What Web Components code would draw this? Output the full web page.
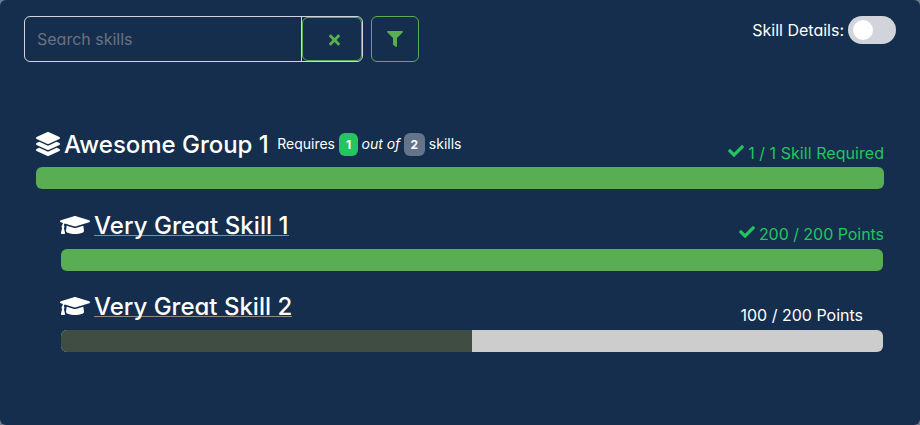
<!DOCTYPE html>
<html lang="en"><head><meta charset="utf-8"><title>Skills</title>
<style>
html{background:#6f7c8e}
body{margin:0;font:16px/24px Inter,"Noto Sans",sans-serif;font-feature-settings:"cv02","cv03","cv04","cv11";color:#fff}
</style></head><body>
<skills-panel></skills-panel>
<script>
const ICONS={
layers:[512,'M12.41 148.02l232.94 105.67c6.8 3.09 14.49 3.09 21.29 0l232.94-105.67c16.55-7.51 16.55-32.52 0-40.03L266.65 2.31a25.607 25.607 0 0 0-21.29 0L12.41 107.98c-16.55 7.51-16.55 32.53 0 40.04zm487.18 88.28l-58.09-26.33-161.64 73.27c-7.56 3.43-15.59 5.17-23.86 5.17s-16.29-1.74-23.86-5.17L70.51 209.97l-58.1 26.33c-16.55 7.5-16.55 32.5 0 40l232.94 105.59c6.8 3.08 14.49 3.08 21.29 0L499.59 276.3c16.55-7.5 16.55-32.5 0-40zm0 127.8l-57.87-26.23-161.86 73.37c-7.56 3.43-15.59 5.17-23.86 5.17s-16.29-1.74-23.86-5.17L70.29 337.87 12.41 364.1c-16.55 7.5-16.55 32.5 0 40l232.94 105.59c6.8 3.08 14.49 3.08 21.29 0L499.59 404.1c16.55-7.5 16.55-32.5 0-40z'],
cap:[640,'M622.34 153.2L343.4 67.5c-15.2-4.67-31.6-4.67-46.79 0L17.66 153.2c-23.54 7.23-23.54 38.36 0 45.59l48.63 14.94c-10.67 13.19-17.23 29.28-17.88 46.9C38.78 266.15 32 276.11 32 288c0 10.78 5.68 19.85 13.86 25.65L20.33 428.53C18.11 438.52 25.71 448 35.94 448h56.11c10.24 0 17.84-9.48 15.62-19.47L82.14 313.65C90.32 307.85 96 298.78 96 288c0-11.57-6.47-21.25-15.66-26.87.76-15.02 8.44-28.3 20.69-36.72L296.6 284.5c9.06 2.78 26.44 6.25 46.79 0l278.95-85.7c23.55-7.24 23.55-38.36 0-45.6zM352.79 315.09c-28.53 8.76-52.84 3.92-65.59 0l-145.02-44.55L128 384c0 35.35 85.96 64 192 64s192-28.65 192-64l-14.18-113.47-145.03 44.56z'],
check:[512,'M173.898 439.404l-166.4-166.4c-9.997-9.997-9.997-26.206 0-36.204l36.203-36.204c9.997-9.998 26.207-9.998 36.204 0L192 312.69 432.095 72.596c9.997-9.997 26.207-9.997 36.204 0l36.203 36.204c9.997 9.997 9.997 26.206 0 36.204l-294.4 294.401c-9.998 9.997-26.207 9.997-36.204-.001z'],
times:[352,'M242.72 256l100.07-100.07c12.28-12.28 12.28-32.19 0-44.48l-22.24-22.24c-12.28-12.28-32.19-12.28-44.48 0L176 189.28 75.93 89.21c-12.28-12.28-32.19-12.28-44.48 0L9.21 111.45c-12.28 12.28-12.28 32.19 0 44.48L109.28 256 9.21 356.07c-12.28 12.28-12.28 32.19 0 44.48l22.24 22.24c12.28 12.28 32.2 12.28 44.48 0L176 322.72l100.07 100.07c12.28 12.28 32.2 12.28 44.48 0l22.24-22.24c12.28-12.28 12.28-32.19 0-44.48L242.72 256z'],
filter:[512,'M487.976 0H24.028C2.71 0-8.047 25.866 7.058 40.971L192 225.941V432c0 7.831 3.821 15.17 10.237 19.662l80 55.98C298.02 518.69 320 507.493 320 487.98V225.941l184.947-184.97C520.021 25.896 509.338 0 487.976 0z']};
const define=(name,render)=>customElements.define(name,class extends HTMLElement{
  connectedCallback(){ if(!this.shadowRoot) this.attachShadow({mode:'open'}).innerHTML=render(this); }
});
define('sk-icon',el=>{const [w,d]=ICONS[el.getAttribute('name')];
return `<style>:host{display:inline-block;height:1em;line-height:0;flex:none}svg{height:1em;width:${w/512}em;display:block;fill:currentColor}</style><svg viewBox="0 0 ${w} 512"><path d="${d}"/></svg>`});
define('search-box',()=>`<style>
:host{display:flex;box-sizing:border-box;width:339px;height:46px;border:1px solid #d1d5db;border-radius:6px}
input{box-sizing:border-box;flex:1;min-width:0;border:0;border-right:1px solid #d1d5db;background:none;padding:0 12px;font:inherit;font-feature-settings:inherit;color:#fff;outline:0}
input::placeholder{color:#6b7280;opacity:1}
button{box-sizing:border-box;width:60px;border:1px solid #59ad52;border-radius:6px;background:none;color:#59ad52;font-size:16px;padding:2px 0 0 4px;display:flex;align-items:center;justify-content:center}
</style><input placeholder="Search skills"><button aria-label="Clear"><sk-icon name="times"></sk-icon></button>`);
define('filter-button',()=>`<style>:host{display:block}button{box-sizing:border-box;width:48px;height:46px;border:1px solid #59ad52;border-radius:6px;background:none;color:#59ad52;font-size:16px;padding:0;display:flex;align-items:center;justify-content:center}</style><button aria-label="Filter"><sk-icon name="filter"></sk-icon></button>`);
define('toggle-switch',()=>`<style>:host{display:flex;align-items:center;box-sizing:border-box;width:48px;height:28px;border-radius:14px;background:#d1d5db;padding:0 5px}i{width:20px;height:20px;border-radius:50%;background:#fff}</style><i></i>`);
define('count-badge',()=>`<style>:host{display:inline-block;box-sizing:border-box;height:23px;min-width:var(--w);margin-top:2px;border-radius:6px;font-weight:700;font-size:12px;line-height:23px;text-align:center;background:var(--badge)}</style><slot></slot>`);
define('progress-bar',el=>`<style>:host{display:block;height:22px;border-radius:6px;overflow:hidden;background:#cdcdcd}i{display:block;height:100%;width:${el.getAttribute('value')}%;background:var(--fill,#59ad52)}</style><i></i>`);
define('skill-row',el=>`<style>
:host{display:block}
.head{display:flex;justify-content:space-between;height:36px}
.title{display:flex;align-items:flex-start;font-size:24px;line-height:28px;font-weight:500}
sk-icon{margin-top:1px}
.name{margin-left:4px;letter-spacing:var(--name-spacing,0)}
.name.link{border-bottom:1px solid #8c8b87;height:23px}
.points{display:flex;align-items:flex-start;line-height:24px;padding-top:10px;gap:4px;letter-spacing:var(--points-spacing,0)}
.points sk-icon{margin-top:2px}
:host([link]) .title{margin-top:-1px}
:host([link]) .points{padding-top:9px}
.done{color:#22c55e}
.open{padding-right:21px}
progress-bar{margin:0 var(--bar-inset,0)}
</style><div class="head"><div class="title"><sk-icon name="${el.getAttribute('icon')}"></sk-icon><span class="name ${el.hasAttribute('link')?'link':''}">${el.getAttribute('name')}</span><slot></slot></div>
<div class="points ${el.hasAttribute('done')?'done':'open'}">${el.hasAttribute('done')?'<sk-icon name="check"></sk-icon>':''}<span>${el.getAttribute('points')}</span></div></div>
<progress-bar value="${el.getAttribute('value')}"></progress-bar>`);
define('group-requirement',()=>`<style>:host{display:flex;align-items:center;gap:4px;margin-left:8.5px;height:25px;font-size:14px;font-weight:400}em{font-style:italic;margin:0 -.5px}</style><span>Requires</span><count-badge style="--badge:#22c55e;--w:19px">1</count-badge><em>out of</em><count-badge style="--badge:#64748b;--w:21px">2</count-badge><span>skills</span>`);
define('skills-panel',()=>`<style>
:host{display:block;box-sizing:border-box;height:425px;padding:16px 24px;background:#152e4d;border-radius:6px}
.bar{display:flex;gap:8px;height:46px}
.toggle{margin-left:auto;display:flex;align-items:center;gap:4px;height:28px}
.list{padding:69px 12px 0;display:flex;flex-direction:column}
.skills{display:flex;flex-direction:column;gap:23px;padding:24px 0 0 24px}
.skills skill-row{--bar-inset:1px}
</style>
<div class="bar"><search-box></search-box><filter-button></filter-button><div class="toggle"><span>Skill Details:</span><toggle-switch></toggle-switch></div></div>
<div class="list"><skill-row icon="layers" name="Awesome Group 1" points="1 / 1 Skill Required" value="100" done style="--name-spacing:-.03px;--points-spacing:.05px"><group-requirement></group-requirement></skill-row>
<div class="skills"><skill-row icon="cap" name="Very Great Skill 1" points="200 / 200 Points" value="100" done link style="--name-spacing:.07px;--points-spacing:-.04px"></skill-row>
<skill-row icon="cap" name="Very Great Skill 2" points="100 / 200 Points" value="50" link style="--fill:#3f4d43"></skill-row></div></div>`);
</script></body></html>
